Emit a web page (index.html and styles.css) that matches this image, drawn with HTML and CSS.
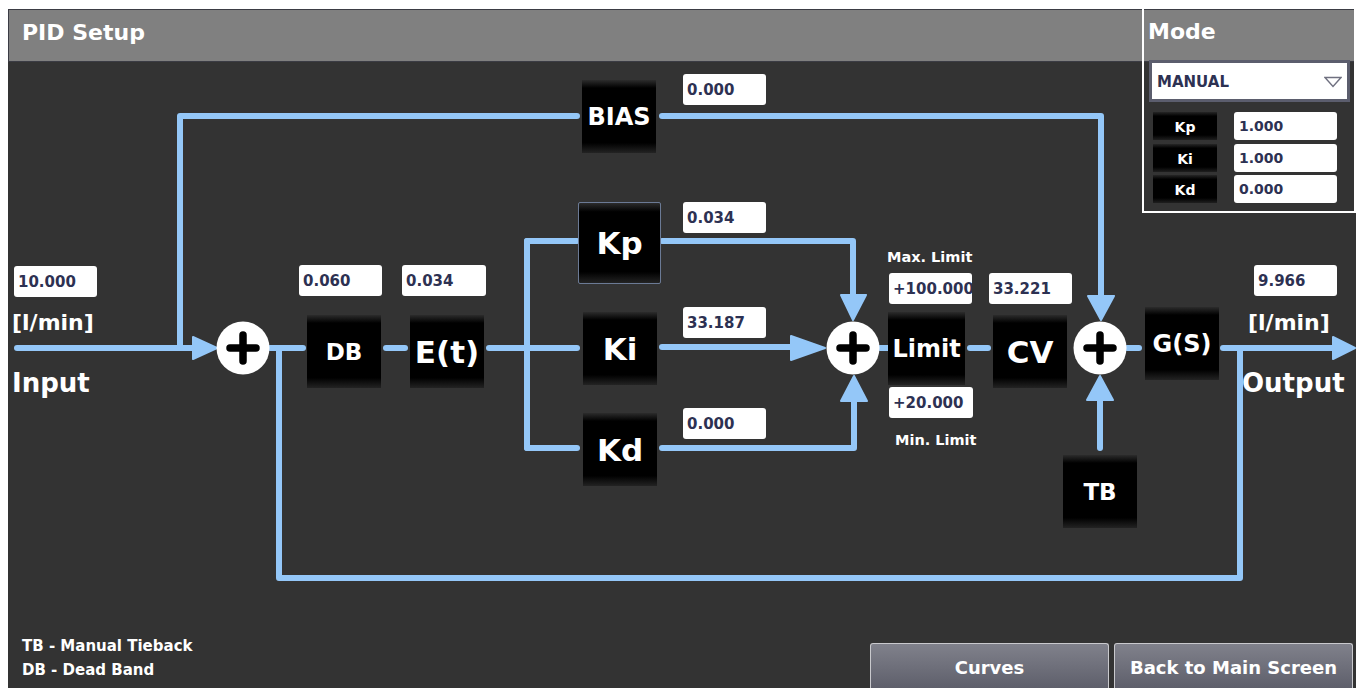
FILE: index.html
```html
<html lang="en">
<head>
    <meta charset="UTF-8">
    <meta name="viewport" content="width=device-width, initial-scale=1.0">
    <title>PID Setup</title>
    <link rel="stylesheet" href="styles.css">
</head>
<body>

<div class="screen">
    <header class="titlebar">
        <h1 class="title">PID Setup</h1>
    </header>

    <div class="diagram">
        <!-- wires use page coordinates, the viewBox shifts them to the diagram origin -->
        <svg class="wires" width="1348" height="580" viewBox="8 62 1348 580">
            <g fill="none" stroke="#94c7f8" stroke-width="6" stroke-linecap="round" stroke-linejoin="round">
                <path d="M17 348 H200"/>
                <path d="M180 348 V116 H577"/>
                <path d="M662 116 H1101 V300"/>
                <path d="M270 348 H303"/>
                <path d="M279 348 V578 H1240 V348"/>
                <path d="M386 348 H405"/>
                <path d="M489 348 H577"/>
                <path d="M527 241 V448"/>
                <path d="M527 241 H577"/>
                <path d="M527 448 H577"/>
                <path d="M662 241 H853 V298"/>
                <path d="M662 347 H800"/>
                <path d="M662 448 H854 V400"/>
                <path d="M880 348 H888"/>
                <path d="M970 348 H988"/>
                <path d="M1127 348 H1139"/>
                <path d="M1223 348 H1336"/>
                <path d="M1100 448 V400"/>
            </g>
            <g fill="#94c7f8" stroke="#94c7f8" stroke-width="2" stroke-linejoin="round">
                <polygon points="193,337 217,348 193,359"/>
                <polygon points="791,336 825,348 791,360"/>
                <polygon points="841,295 853,320 866,295"/>
                <polygon points="841,401 854,376 867,401"/>
                <polygon points="1088,296 1101,320 1114,296"/>
                <polygon points="1087,400 1100,376 1113,400"/>
                <polygon points="1333,337 1355,348 1333,359"/>
            </g>
            <g fill="#fff">
                <circle cx="243" cy="348" r="26.5"/>
                <circle cx="853" cy="348" r="26.5"/>
                <circle cx="1100" cy="348" r="26.5"/>
            </g>
            <g stroke="#000" stroke-width="7.5" stroke-linecap="round">
                <path d="M230 348 H256 M243 335 V361"/>
                <path d="M840 348 H866 M853 335 V361"/>
                <path d="M1087 348 H1113 M1100 335 V361"/>
            </g>
        </svg>

        <div class="value n-in-val">10.000</div>
        <div class="caption unit n-in-unit">[l/min]</div>
        <div class="caption io n-in-name">Input</div>

        <div class="value n-db-val">0.060</div>
        <div class="block small n-db">DB</div>
        <div class="value n-et-val">0.034</div>
        <div class="block big n-et">E(t)</div>

        <div class="block mid n-bias">BIAS</div>
        <div class="value n-bias-val">0.000</div>

        <div class="block big selected n-kp">Kp</div>
        <div class="value n-kp-val">0.034</div>
        <div class="block big n-ki">Ki</div>
        <div class="value n-ki-val">33.187</div>
        <div class="block big n-kd">Kd</div>
        <div class="value n-kd-val">0.000</div>

        <div class="caption limit n-max">Max. Limit</div>
        <div class="value n-max-val">+100.000</div>
        <div class="block mid n-limit">Limit</div>
        <div class="value n-min-val">+20.000</div>
        <div class="caption limit n-min">Min. Limit</div>

        <div class="value n-cv-val">33.221</div>
        <div class="block big n-cv">CV</div>
        <div class="block mid n-gs">G(S)</div>
        <div class="block small n-tb">TB</div>

        <div class="value n-out-val">9.966</div>
        <div class="caption unit n-out-unit">[l/min]</div>
        <div class="caption io n-out-name">Output</div>
    </div>

    <footer class="footer">
        <div class="legend">
            <div>TB - Manual Tieback</div>
            <div>DB - Dead Band</div>
        </div>
        <div class="actions">
            <button class="btn">Curves</button>
            <button class="btn">Back to Main Screen</button>
        </div>
    </footer>

    <aside class="mode">
        <div class="mode-title">Mode</div>
        <div class="dropdown">
            <span>MANUAL</span>
            <svg width="18" height="12" viewBox="0 0 18 12">
                <polygon points="1,1.5 17,1.5 9,10.5" fill="none" stroke="#6f7080" stroke-width="1.4"/>
            </svg>
        </div>
        <div class="gains">
            <div class="gain-name">Kp</div>
            <div class="gain-val">1.000</div>
            <div class="gain-name">Ki</div>
            <div class="gain-val">1.000</div>
            <div class="gain-name">Kd</div>
            <div class="gain-val">0.000</div>
        </div>
    </aside>
</div>

</body>
</html>
```

FILE: styles.css
```css
body {
    margin: 0;
    background-color: #fff;
    font-family: "DejaVu Sans", Verdana, sans-serif;
    font-weight: bold;
}
.screen {
    position: relative;
    display: flex;
    flex-direction: column;
    width: 1348px;
    height: 679px;
    margin: 9px 0 0 8px;
    background-color: #333;
    overflow: hidden;
}
.titlebar {
    height: 53px;
    box-sizing: border-box;
    padding-left: 13px;
    background-color: #808080;
    border: 1px solid #3b3c44;
    border-right: none;
}
.title {
    margin: 0;
    font-size: 22px;
    line-height: 46px;
    color: #fff;
}

/* diagram canvas */
.diagram {
    position: relative;
    height: 572px;
}
.wires {
    position: absolute;
    left: 0;
    top: 0;
    overflow: visible;
}
.value, .block, .caption {
    position: absolute;
}
.value {
    width: 83px;
    height: 31px;
    box-sizing: border-box;
    padding-left: 4px;
    background-color: #fff;
    border-radius: 3px;
    font-size: 15px;
    line-height: 32px;
    color: #2d3152;
    white-space: nowrap;
    overflow: hidden;
}
.block {
    display: flex;
    align-items: center;
    justify-content: center;
    width: 74px;
    height: 73px;
    box-sizing: border-box;
    background: linear-gradient(#2c2c2c 0, #000 11%, #000 86%, #232323 100%);
    color: #fff;
}
.block.small {
    font-size: 23px;
}
.block.mid {
    font-size: 24px;
}
.block.big {
    font-size: 31px;
}
.block.selected {
    border: 1px solid #6b7a95;
    border-radius: 2px;
}
.caption {
    color: #fff;
    white-space: nowrap;
}
.unit {
    font-size: 22px;
    line-height: 26px;
}
.io {
    font-size: 26px;
    line-height: 32px;
}
.limit {
    font-size: 14.5px;
    line-height: 18px;
}

/* node places on the canvas */
.n-in-val { left: 6px; top: 204px; }
.n-in-unit { left: 4px; top: 248px; }
.n-in-name { left: 4px; top: 305px; }
.n-db-val { left: 291px; top: 203px; }
.n-db { left: 299px; top: 253px; }
.n-et-val { left: 394px; top: 203px; width: 84px; }
.n-et { left: 402px; top: 253px; font-size: 32px; }
.n-bias { left: 574px; top: 18px; font-size: 23px; }
.n-bias-val { left: 675px; top: 12px; }
.n-kp { left: 570px; top: 140px; width: 83px; height: 82px; }
.n-kp-val { left: 675px; top: 140px; }
.n-ki { left: 575px; top: 250px; }
.n-ki-val { left: 675px; top: 245px; }
.n-kd { left: 575px; top: 351px; }
.n-kd-val { left: 675px; top: 346px; }
.n-max { left: 879px; top: 186px; }
.n-max-val { left: 881px; top: 211px; width: 83px; }
.n-limit { left: 880px; top: 250px; width: 77px; }
.n-min-val { left: 881px; top: 325px; width: 84px; }
.n-min { left: 887px; top: 369px; }
.n-cv-val { left: 981px; top: 211px; }
.n-cv { left: 985px; top: 253px; }
.n-gs { left: 1137px; top: 245px; font-size: 25px; }
.n-tb { left: 1055px; top: 393px; font-size: 24px; }
.n-out-val { left: 1246px; top: 203px; }
.n-out-unit { left: 1240px; top: 248px; }
.n-out-name { left: 1234px; top: 305px; }

/* footer */
.footer {
    flex: 1;
    display: flex;
    justify-content: space-between;
}
.legend {
    padding-left: 14px;
    font-size: 15px;
    line-height: 24px;
    color: #fff;
}
.actions {
    display: flex;
    gap: 5px;
    align-self: flex-end;
    margin-right: 3px;
}
.btn {
    width: 239px;
    height: 45px;
    padding: 3px 0 0;
    background: linear-gradient(#80818b, #5e5f6b);
    border: 1px solid #c9c9cd;
    border-bottom: none;
    border-radius: 3px 3px 0 0;
    font-family: inherit;
    font-weight: bold;
    font-size: 18px;
    color: #fff;
}

/* mode panel in the top right corner */
.mode {
    position: absolute;
    top: 0;
    right: 0;
    width: 214px;
    height: 204px;
    box-sizing: border-box;
    border: 2px solid #fff;
    border-top: none;
}
.mode-title {
    height: 51px;
    padding-left: 4px;
    font-size: 22px;
    line-height: 46px;
    color: #fff;
}
.dropdown {
    display: flex;
    align-items: center;
    justify-content: space-between;
    width: 201px;
    height: 42px;
    box-sizing: border-box;
    margin-left: 5px;
    padding: 1px 5px 0 5px;
    background-color: #fff;
    border: 3px solid #5b5d6d;
    font-size: 15px;
    color: #2d3152;
}
.gains {
    display: grid;
    grid-template-columns: 64px 103px;
    grid-auto-rows: 28px;
    column-gap: 17px;
    row-gap: 3.5px;
    margin: 10px 0 0 9px;
}
.gain-name {
    background: linear-gradient(#262626 0, #000 15%, #000 82%, #1f1f1f 100%);
    font-size: 14px;
    line-height: 30px;
    text-align: center;
    color: #fff;
}
.gain-val {
    padding-left: 5px;
    background-color: #fff;
    border-radius: 3px;
    font-size: 14px;
    line-height: 28px;
    color: #2d3152;
}
```
